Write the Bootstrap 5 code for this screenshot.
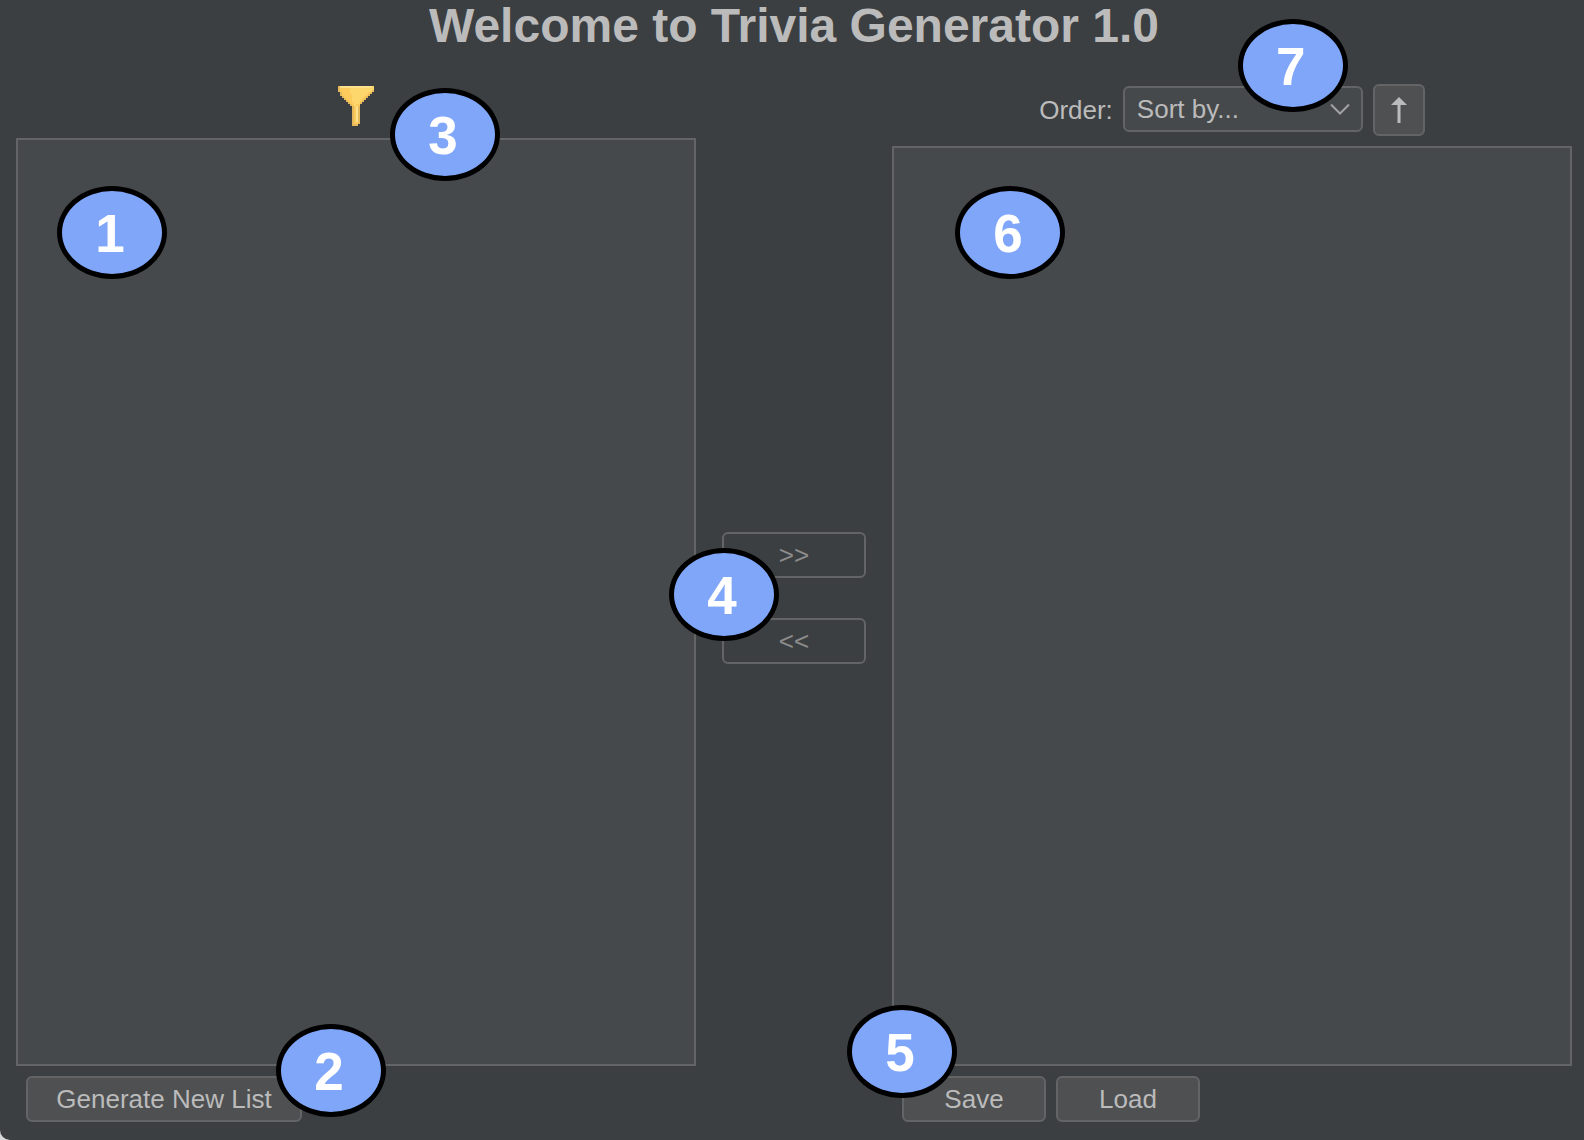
<!DOCTYPE html>
<html lang="en">
<head>
<meta charset="utf-8">
<meta name="viewport" content="width=device-width, initial-scale=1">
<title>Trivia Generator</title>
<link href="https://cdn.jsdelivr.net/npm/bootstrap@5.3.0/dist/css/bootstrap.min.css" rel="stylesheet">
<style>
  :root { --edge: #626466; --ink: #bbbbbb; }
  body { background: #d8d8d8; color: var(--ink); font: 26px/30px "Liberation Sans", Arial, sans-serif; }
  .app-window { background: #3c3f41; border-bottom-left-radius: 10px; padding: 0 12px 16px 16px; }
  .app-title { font-size: 48px; line-height: 52px; font-weight: 700; margin-bottom: 20px; }
  .middle-pane { width: 196px; gap: 40px; }
  .tools-left { padding: 14px 0 12px; }
  .tools-right { padding: 12px 0 10px; gap: 10px; }
  .footer-tools { padding: 10px 10px 2px; gap: 10px; }
  .list-pane { background: #46494b; border: 2px solid var(--edge); }
  .tool-btn {
    --bs-btn-font-size: 26px; --bs-btn-line-height: 30px;
    --bs-btn-padding-x: 0; --bs-btn-padding-y: 6px;
    --bs-btn-border-width: 2px; --bs-btn-border-radius: 6px;
    --bs-btn-color: var(--ink); --bs-btn-bg: #4e5052; --bs-btn-border-color: var(--edge);
    --bs-btn-hover-color: #fff; --bs-btn-hover-bg: #5a5d5f; --bs-btn-hover-border-color: #777;
    --bs-btn-disabled-color: #8c8c8c; --bs-btn-disabled-bg: transparent;
    --bs-btn-disabled-border-color: var(--edge); --bs-btn-disabled-opacity: 1;
    width: 144px;
  }
  .tool-btn.wide { width: 276px; }
  .tool-btn.square { width: 52px; height: 52px; }
  .filter-btn { --bs-btn-border-width: 0; line-height: 0; }
  .sort-box { width: 240px; height: 48px; }
  .sort-box .form-select {
    height: 46px; padding: 0 36px 0 12px; font-size: 26px; line-height: 30px;
    color: var(--ink); background: #46494b none; border: 2px solid var(--edge); border-radius: 6px;
  }
  .sort-box svg { position: absolute; right: 13px; top: 17px; pointer-events: none; }
  .callout {
    position: absolute; z-index: 2; width: 110px; height: 93px; padding: 2px 4px 0 0;
    border: 5px solid #000; border-radius: 50%; background: #80a6fa; color: #fff;
    font-size: 53px; line-height: 60px; font-weight: 700;
  }
  .at-source { left: 41px; top: 114px; }
  .at-filter { left: 374px; top: 16px; }
  .at-generate { left: 260px; bottom: 7px; }
  .at-transfer { left: -27px; top: 476px; }
  .at-chosen { left: 63px; top: 114px; }
  .at-files { left: -45px; bottom: 26px; }
  .at-order { left: 115px; top: -67px; }
</style>
</head>
<body>
<div class="app-window d-flex flex-column min-vh-100">
  <h1 class="app-title text-center">Welcome to Trivia Generator 1.0</h1>
  <main class="d-flex flex-grow-1">
    <section class="position-relative d-flex flex-column flex-fill w-50">
      <div class="tools-left d-flex justify-content-center">
        <button type="button" class="btn filter-btn p-0" aria-label="Filter">
          <svg width="36" height="40" viewBox="0 0 18 20" shape-rendering="crispEdges" aria-hidden="true">
            <path fill="#e6b85c" d="M0 0H18V3H17V4H16V5H15V6H14V7H13V8H12V9H11V19H10V20H7V10H6V9H5V8H4V7H3V6H2V5H1V3H0Z"/>
            <path fill="#fccb5c" d="M1 1H17V3H16V4H15V5H14V6H13V7H12V8H11V10H10V19H8V10H7V9H6V8H5V7H4V6H3V5H2V3H1Z"/>
            <path fill="#fdd66c" d="M6 0H18V2H17V3H15V4H14V5H13V6H12V7H11V9H9V10H8V8H7V4H6Z"/>
            <path fill="#ffe08a" d="M1 0H17V1H1Z M9 10H10V18H9Z"/>
          </svg>
        </button>
      </div>
      <div class="list-pane flex-grow-1"></div>
      <div class="footer-tools d-flex"><button type="button" class="btn tool-btn wide">Generate New List</button></div>
      <span class="callout at-source d-flex align-items-center justify-content-center">1</span>
      <span class="callout at-generate d-flex align-items-center justify-content-center">2</span>
      <span class="callout at-filter d-flex align-items-center justify-content-center">3</span>
    </section>
    <section class="middle-pane position-relative d-flex flex-column flex-shrink-0 align-items-center justify-content-center">
      <button type="button" class="btn tool-btn" disabled>&gt;&gt;</button>
      <button type="button" class="btn tool-btn" disabled>&lt;&lt;</button>
      <span class="callout at-transfer d-flex align-items-center justify-content-center">4</span>
    </section>
    <section class="position-relative d-flex flex-column flex-fill w-50">
      <div class="tools-right d-flex justify-content-center align-items-center">
        <label for="order">Order:</label>
        <div class="sort-box position-relative">
          <select id="order" class="form-select"><option>Sort by...</option></select>
          <svg width="20" height="12" viewBox="0 0 20 12" fill="none" stroke="#a0a2a3" stroke-width="2" aria-hidden="true"><path d="M1 1.500L10 10.500L19 1.500"/></svg>
          <span class="callout at-order d-flex align-items-center justify-content-center">7</span>
        </div>
        <button type="button" class="btn tool-btn square d-flex align-items-center justify-content-center" aria-label="Ascending">
          <svg width="16" height="26" viewBox="0 0 16 26" fill="#bbbbbb" aria-hidden="true"><path d="M8 0L16 8H9.500V26H6.500V8H0Z"/></svg>
        </button>
      </div>
      <div class="list-pane flex-grow-1"></div>
      <div class="footer-tools d-flex">
        <button type="button" class="btn tool-btn">Save</button>
        <button type="button" class="btn tool-btn">Load</button>
      </div>
      <span class="callout at-files d-flex align-items-center justify-content-center">5</span>
      <span class="callout at-chosen d-flex align-items-center justify-content-center">6</span>
    </section>
  </main>
</div>
<script src="https://cdn.jsdelivr.net/npm/bootstrap@5.3.0/dist/js/bootstrap.bundle.min.js"></script>
</body>
</html>
